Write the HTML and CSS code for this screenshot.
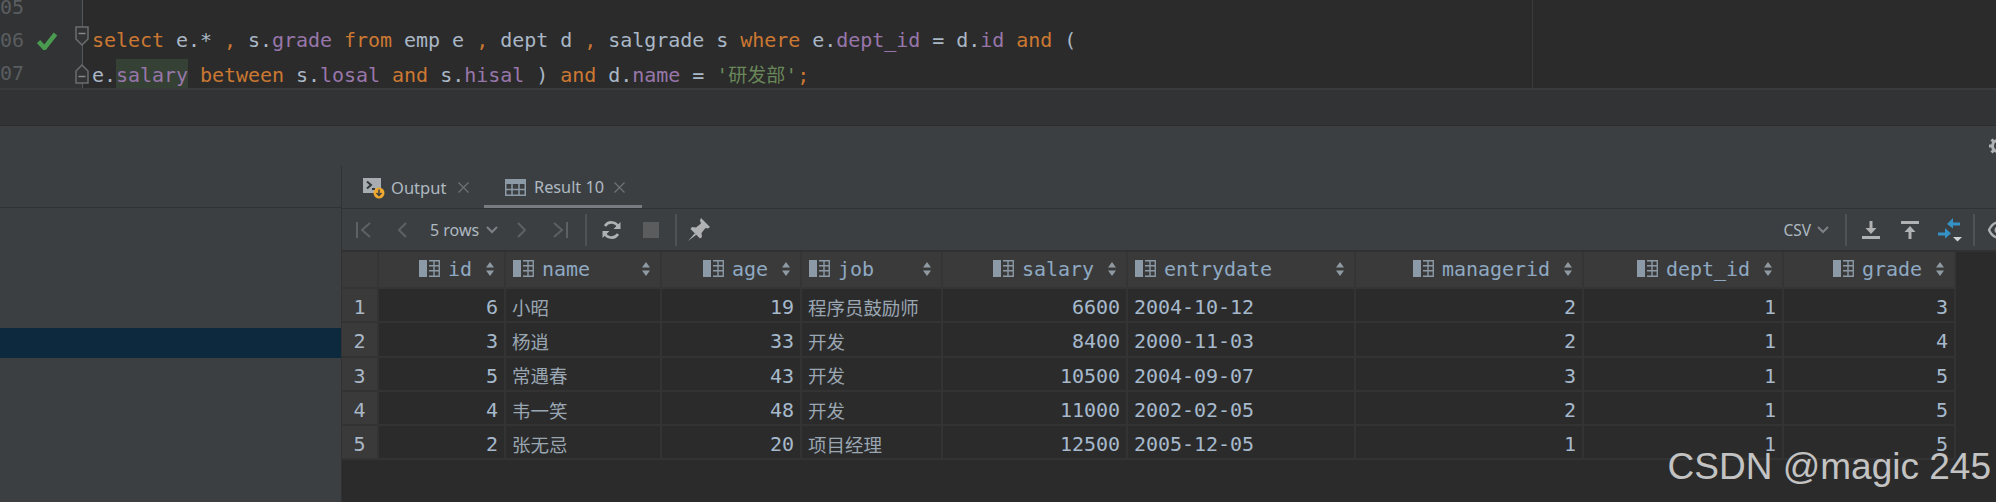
FILE: index.html
```html
<!DOCTYPE html>
<html lang="zh">
<head>
<meta charset="utf-8">
<title>Result 10</title>
<link rel="stylesheet" href="styles.css">
</head>
<body>
<svg class="defs" width="0" height="0" aria-hidden="true">
  <symbol id="col" viewBox="0 0 21 17">
    <rect x="0" y="0" width="8" height="17" fill="#8b9aa6"/>
    <path d="M10 .75H20.25V16.25H10M10 5.75H20M10 10.75H20M15 1V16" fill="none" stroke="#8b9aa6" stroke-width="1.4"/>
  </symbol>
  <symbol id="sort" viewBox="0 0 8 16">
    <path d="M4 1 8 6.5H0ZM4 15 0 9.500H8Z" fill="#8f9aa3"/>
  </symbol>
</svg>

<section class="editor">
  <div class="line first"><span class="ln">05</span><span class="fold"></span><code></code></div>
  <div class="line">
    <span class="ln">06<svg class="check" width="20" height="18" viewBox="0 0 20 18"><path d="M1.500 9.500 7.500 16 18.500 2" fill="none" stroke="#4a9a4f" stroke-width="4.500"/></svg></span>
    <span class="fold"><svg width="20" height="33" viewBox="0 0 20 33"><path d="M4 3H16V15L10 21 4 15Z" fill="#313335" stroke="#6b6d6f" stroke-width="1.500"/><path d="M6.500 9.500H13.500" stroke="#85878a" stroke-width="1.500"/></svg></span>
    <code><b>select</b> e.* <b>,</b> s.<i>grade</i> <b>from</b> emp e <b>,</b> dept d <b>,</b> salgrade s <b>where</b> e.<i>dept_id</i> = d.<i>id</i> <b>and</b> (</code>
  </div>
  <div class="line">
    <span class="ln">07</span>
    <span class="fold"><svg width="20" height="33" viewBox="0 0 20 33"><path d="M4 26H16V14L10 8 4 14Z" fill="#313335" stroke="#6b6d6f" stroke-width="1.500"/><path d="M6.500 19.500H13.500" stroke="#85878a" stroke-width="1.500"/></svg></span>
    <code>e.<i class="mark">salary</i> <b>between</b> s.<i>losal</i> <b>and</b> s.<i>hisal</i> ) <b>and</b> d.<i>name</i> = <em>'<span class="cjk">研发部</span>'</em><b>;</b></code>
  </div>
</section>
<div class="band"></div>

<main class="pane">
  <aside class="side">
    <div class="side-head"></div>
    <div class="side-sel"></div>
  </aside>
  <section class="tool">
    <div class="tool-top">
      <svg class="gear" width="20" height="20" viewBox="0 0 20 20"><circle cx="10" cy="10" r="5.500" fill="none" stroke="#afb1b3" stroke-width="3"/><path d="M10 1V4M10 16V19M1 10H4M16 10H19M3.500 3.500 5.500 5.500M14.500 14.500 16.500 16.500M3.500 16.500 5.500 14.500M14.500 5.500 16.500 3.500" stroke="#afb1b3" stroke-width="3"/></svg>
    </div>
    <div class="tool-body">
      <div class="tabs">
        <div class="tab">
          <svg class="tab-ic" width="24" height="24" viewBox="0 0 24 24"><rect x="1" y="3" width="18" height="15" fill="#a8adb1"/><path d="M5 6.500 9 10 5 13.500" fill="none" stroke="#33373a" stroke-width="2"/><path d="M10 14H13" stroke="#33373a" stroke-width="2"/><circle cx="17" cy="18" r="5.500" fill="#eea82f"/><path d="M17 14.500V20M14.500 18 17 20.500 19.500 18" fill="none" stroke="#3c3f41" stroke-width="1.500"/></svg>
          <span>Output</span>
          <svg class="x" width="11" height="11" viewBox="0 0 11 11"><path d="M.5.500 10.500 10.500M10.500.500.5 10.500" stroke="#6e7376" stroke-width="1.200"/></svg>
        </div>
        <div class="tab active">
          <svg class="tab-ic" width="21" height="17" viewBox="0 0 21 17"><rect width="21" height="5" fill="#8b9aa6"/><path d="M.75 5V16.250H20.250V5M0 10.500H21M7 5V17M14 5V17" fill="none" stroke="#8b9aa6" stroke-width="1.500"/></svg>
          <span>Result 10</span>
          <svg class="x" width="11" height="11" viewBox="0 0 11 11"><path d="M.5.500 10.500 10.500M10.500.500.5 10.500" stroke="#6e7376" stroke-width="1.200"/></svg>
        </div>
      </div>

      <div class="toolbar">
        <svg class="t1" width="15" height="16" viewBox="0 0 15 16"><path d="M1 0V16M14 1 6 8 14 15" fill="none" stroke="#5d6164" stroke-width="2"/></svg>
        <svg class="t2" width="9" height="16" viewBox="0 0 9 16"><path d="M8 1 1 8 8 15" fill="none" stroke="#5d6164" stroke-width="2"/></svg>
        <span class="rows">5 rows</span>
        <svg class="chev" width="12" height="8" viewBox="0 0 12 8"><path d="M1 1 6 6 11 1" fill="none" stroke="#7c8286" stroke-width="2"/></svg>
        <svg class="t3" width="9" height="16" viewBox="0 0 9 16"><path d="M1 1 8 8 1 15" fill="none" stroke="#5d6164" stroke-width="2"/></svg>
        <svg class="t4" width="15" height="16" viewBox="0 0 15 16"><path d="M14 0V16M1 1 9 8 1 15" fill="none" stroke="#5d6164" stroke-width="2"/></svg>
        <span class="sep s1"></span>
        <svg class="t5" width="19" height="18" viewBox="0 0 19 18"><path d="M16.500 6.500A7.500 7.500 0 0 0 3 5M2.500 11.500A7.500 7.500 0 0 0 16 13" fill="none" stroke="#afb1b3" stroke-width="2.600"/><path d="M18.500 1V8H11.500ZM.5 17V10H7.500Z" fill="#afb1b3"/></svg>
        <span class="stop"></span>
        <span class="sep s2"></span>
        <svg class="t6" width="22" height="24" viewBox="0 0 22 24"><path d="M13 0 22 9 20 10.500 17.500 10 13.500 15 14 19 12 20.500 2.500 11 4 9 8 9.500 13 5.500 12 2.500ZM7 15 0 23 8 17Z" fill="#afb1b3"/></svg>
        <span class="spacer"></span>
        <span class="csv">CSV</span>
        <svg class="chev2" width="12" height="8" viewBox="0 0 12 8"><path d="M1 1 6 6 11 1" fill="none" stroke="#7c8286" stroke-width="2"/></svg>
        <span class="sep s3"></span>
        <svg class="t7" width="18" height="18" viewBox="0 0 18 18"><path d="M0 16.500H18" stroke="#afb1b3" stroke-width="3"/><path d="M9 0V10" stroke="#afb1b3" stroke-width="3"/><path d="M3.500 7H14.500L9 13Z" fill="#afb1b3"/></svg>
        <svg class="t8" width="18" height="18" viewBox="0 0 18 18"><path d="M0 1.500H18" stroke="#afb1b3" stroke-width="3"/><path d="M9 18V8" stroke="#afb1b3" stroke-width="3"/><path d="M3.500 11H14.500L9 5Z" fill="#afb1b3"/></svg>
        <svg class="t9" width="24" height="24" viewBox="0 0 24 24"><path d="M22 4.500H14V7.500H22ZM15 0 9 6 15 10.500ZM0 14.500H8V17.500H0Z" fill="#3592c4"/><path d="M7 10 13 15.500 7 20.500Z" fill="#3592c4"/><path d="M15 19H24L19.500 23.500Z" fill="#d0d2d3"/></svg>
        <span class="sep s4"></span>
        <svg class="t10" width="20" height="18" viewBox="0 0 20 18"><path d="M1 9C3.500 4 6 1.500 10 1.500S16.500 4 19 9C16.500 14 14 16.500 10 16.500S3.500 14 1 9Z" fill="none" stroke="#afb1b3" stroke-width="2.400"/><circle cx="10" cy="9" r="3.500" fill="#afb1b3"/></svg>
      </div>

      <div class="grid">
        <div class="h num"></div>
        <div class="h end"><svg class="cic"><use href="#col"/></svg><span>id</span><svg class="sic"><use href="#sort"/></svg></div>
        <div class="h"><svg class="cic"><use href="#col"/></svg><span>name</span><svg class="sic"><use href="#sort"/></svg></div>
        <div class="h end"><svg class="cic"><use href="#col"/></svg><span>age</span><svg class="sic"><use href="#sort"/></svg></div>
        <div class="h"><svg class="cic"><use href="#col"/></svg><span>job</span><svg class="sic"><use href="#sort"/></svg></div>
        <div class="h end"><svg class="cic"><use href="#col"/></svg><span>salary</span><svg class="sic"><use href="#sort"/></svg></div>
        <div class="h"><svg class="cic"><use href="#col"/></svg><span>entrydate</span><svg class="sic"><use href="#sort"/></svg></div>
        <div class="h end"><svg class="cic"><use href="#col"/></svg><span>managerid</span><svg class="sic"><use href="#sort"/></svg></div>
        <div class="h end"><svg class="cic"><use href="#col"/></svg><span>dept_id</span><svg class="sic"><use href="#sort"/></svg></div>
        <div class="h end"><svg class="cic"><use href="#col"/></svg><span>grade</span><svg class="sic"><use href="#sort"/></svg></div>

        <div class="c num">1</div><div class="c r">6</div><div class="c z">小昭</div><div class="c r">19</div><div class="c z">程序员鼓励师</div><div class="c r">6600</div><div class="c">2004-10-12</div><div class="c r">2</div><div class="c r">1</div><div class="c r">3</div>
        <div class="c num">2</div><div class="c r">3</div><div class="c z">杨逍</div><div class="c r">33</div><div class="c z">开发</div><div class="c r">8400</div><div class="c">2000-11-03</div><div class="c r">2</div><div class="c r">1</div><div class="c r">4</div>
        <div class="c num">3</div><div class="c r">5</div><div class="c z">常遇春</div><div class="c r">43</div><div class="c z">开发</div><div class="c r">10500</div><div class="c">2004-09-07</div><div class="c r">3</div><div class="c r">1</div><div class="c r">5</div>
        <div class="c num">4</div><div class="c r">4</div><div class="c z">韦一笑</div><div class="c r">48</div><div class="c z">开发</div><div class="c r">11000</div><div class="c">2002-02-05</div><div class="c r">2</div><div class="c r">1</div><div class="c r">5</div>
        <div class="c num">5</div><div class="c r">2</div><div class="c z">张无忌</div><div class="c r">20</div><div class="c z">项目经理</div><div class="c r">12500</div><div class="c">2005-12-05</div><div class="c r">1</div><div class="c r">1</div><div class="c r">5</div>
      </div>
    </div>
  </section>
</main>
<div class="mark-csdn">CSDN @magic 245</div>
</body>
</html>
```

FILE: styles.css
```css
* { box-sizing: border-box; }
html, body { margin: 0; height: 100%; }
body {
  position: relative;
  width: 1996px;
  height: 502px;
  overflow: hidden;
  background: #3c3f41;
  display: flex;
  flex-direction: column;
  font-family: "Noto Sans", sans-serif;
  color: #a9b7c6;
}
.defs { position: absolute; }

/* editor */
.editor {
  height: 88px;
  flex: none;
  overflow: hidden;
  background: #2b2b2b linear-gradient(#3a3b3c, #3a3b3c) no-repeat 1532px 0 / 1px 100%;
  font: 20px/33px "DejaVu Sans Mono", "Noto Sans CJK SC", monospace;
  letter-spacing: -0.04px;
}
.line { display: flex; height: 33px; }
.line.first { margin-top: -9px; }
.ln {
  width: 72px;
  flex: none;
  background: #313335;
  color: #5a5d5f;
  display: flex;
  align-items: center;
  gap: 13px;
}
.check { flex: none; }
.fold {
  width: 20px;
  flex: none;
  background: linear-gradient(90deg, #313335 10px, #55585a 10px, #55585a 11px, transparent 11px);
}
.fold svg { display: block; }
code { font: inherit; white-space: pre; color: #a9b7c6; }
code b { font-weight: 400; color: #cc7832; }
code i { font-style: normal; color: #9876aa; }
code em { font-style: normal; color: #6a8759; }
code .mark { background: #344134; display: inline-block; height: 33px; }
.cjk { font-family: "Noto Sans CJK SC", sans-serif; font-size: 19px; }

.band {
  height: 38px;
  flex: none;
  background: #313335;
  border-top: 2px solid #393b3d;
  border-bottom: 1px solid #2b2d2e;
}

/* lower pane */
.pane { flex: 1; display: flex; min-height: 0; }
.side { width: 341px; flex: none; }
.side-head { height: 82px; border-bottom: 1px solid #323232; margin-bottom: 120px; }
.side-sel { height: 30px; background: #0d293e; }

.tool { flex: 1; min-width: 0; display: flex; flex-direction: column; overflow: hidden; }
.tool-top { height: 40px; flex: none; display: flex; justify-content: flex-end; align-items: center; }
.gear { margin-right: -12px; flex: none; }
.tool-body { flex: 1; display: flex; flex-direction: column; border-left: 1px solid #323232; min-height: 0; }

.tabs {
  height: 43px;
  flex: none;
  display: flex;
  border-bottom: 1px solid #323232;
  font-size: 16.300px;
  color: #aeb9c2;
}
.tab {
  display: flex;
  align-items: center;
  padding-left: 20px;
  width: 142px;
  font-size: 16.500px;
}
.tab.active {
  width: 158px;
  height: 42px;
  padding: 3px 0 0 21px;
  border-bottom: 3px solid #787c80;
  font-size: 16.300px;
}
.tab-ic { flex: none; margin-right: 5px; }
.tab.active .tab-ic { margin-right: 8px; }
.x { margin-left: 12px; flex: none; }
.tab.active .x { margin-left: 10px; }

.toolbar {
  height: 43px;
  flex: none;
  display: flex;
  align-items: center;
  border-bottom: 2px solid #313131;
  font-size: 16px;
  color: #aeb9c2;
}
.toolbar svg { flex: none; }
.t1 { margin-left: 14px; }
.t2 { margin-left: 27px; }
.rows { margin-left: 23px; }
.chev { margin-left: 7px; }
.t3 { margin-left: 19px; }
.t4 { margin-left: 27px; }
.sep { width: 2px; height: 32px; background: #505355; flex: none; }
.s1 { margin-left: 17px; }
.t5 { margin-left: 15px; }
.stop { width: 16px; height: 16px; background: #5a5c5e; margin-left: 22px; flex: none; }
.s2 { margin-left: 16px; }
.t6 { margin-left: 11px; }
.spacer { flex: 1; }
.csv { font-size: 15.500px; }
.chev2 { margin-left: 6px; }
.s3 { margin-left: 16px; }
.t7 { margin-left: 15px; }
.t8 { margin-left: 21px; }
.t9 { margin-left: 19px; }
.s4 { margin-left: 11px; }
.t10 { margin-left: 13px; margin-right: -12px; }

/* result table */
.grid {
  flex: 1;
  background: #2b2b2b;
  display: grid;
  grid-template-columns: 37px 127px 156px 140px 141px 185px 228px 228px 200px 172px;
  grid-template-rows: 37px repeat(5, 34.300px);
  align-content: start;
  font: 20px/1 "DejaVu Sans Mono", "Noto Sans CJK SC", monospace;
  letter-spacing: -0.04px;
}
.h, .c {
  display: flex;
  align-items: center;
  min-width: 0;
  white-space: nowrap;
  border-right: 2px solid #333333;
  border-bottom: 2px solid #333333;
}
.h {
  background: #3a3a3a;
  color: #8fa9c2;
  padding: 0 10px 2px 7px;
  border-color: #353535;
}
.cic { width: 21px; height: 17px; flex: none; margin-right: 8px; }
.sic { width: 8px; height: 16px; flex: none; margin-left: auto; }
.h.end { justify-content: flex-end; }
.h.end .sic { margin-left: 14px; }
.c { padding: 4px 6px 0; color: #a6b9cc; }
.c.r { justify-content: flex-end; }
.c.z { font-family: "Noto Sans CJK SC", sans-serif; font-size: 18.500px; color: #9aa6b2; }
.c.num { background: #3a3a3a; justify-content: center; padding: 4px 0 0; color: #a9b7c6; }
.h.num { padding: 0; }

.mark-csdn {
  position: absolute;
  right: 5px;
  top: 445px;
  font: 37px/44px "Liberation Sans", Arial, sans-serif;
  color: #c3c3c3;
  white-space: nowrap;
}
```
